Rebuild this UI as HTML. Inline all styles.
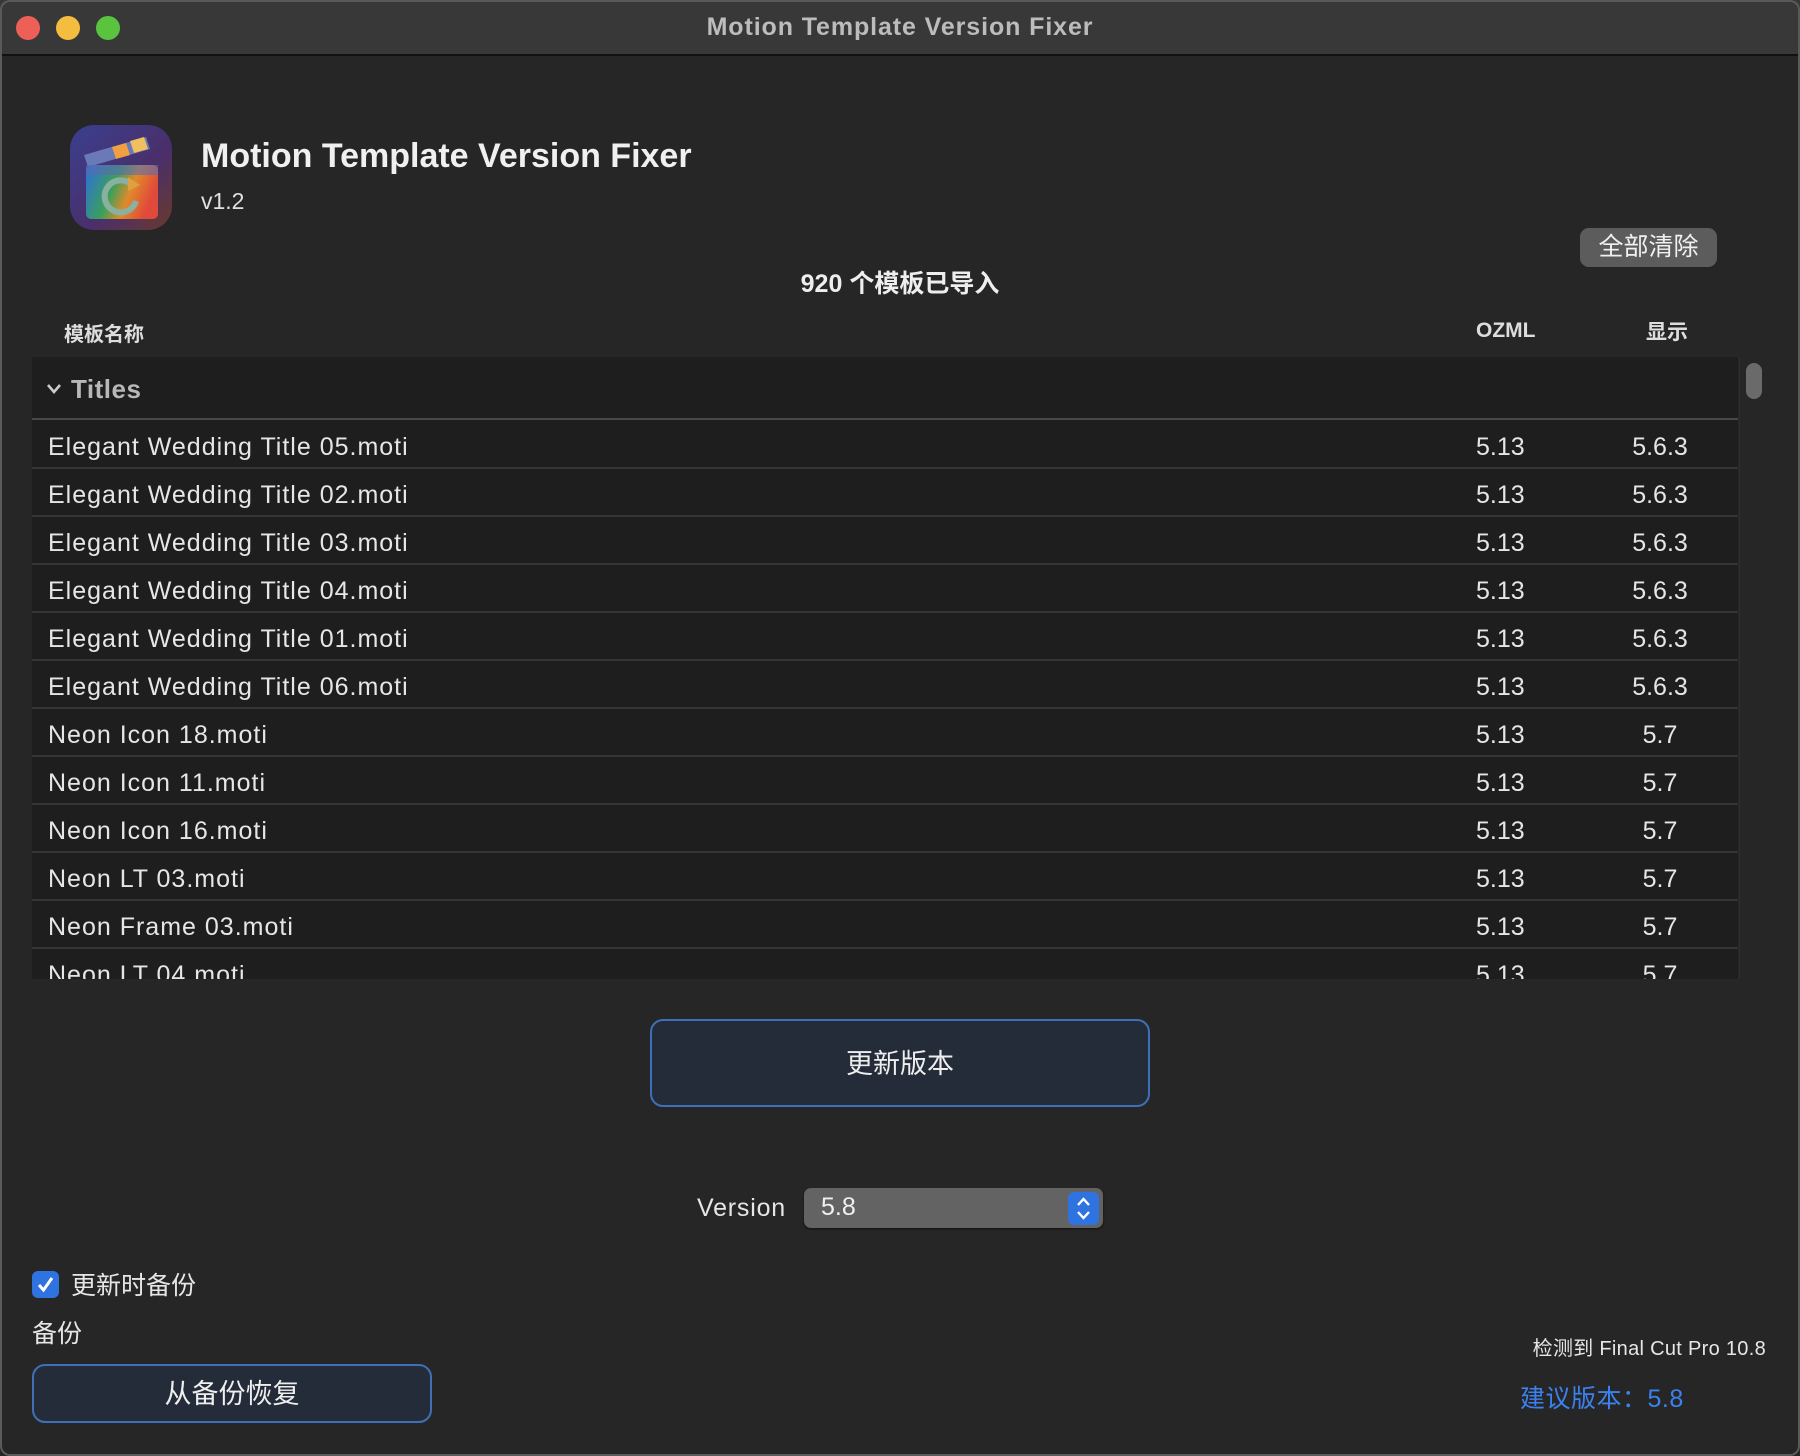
<!DOCTYPE html>
<html><head><meta charset="utf-8">
<style>
*{margin:0;padding:0;box-sizing:border-box}
body{width:1800px;height:1456px;background:#262626;font-family:"Liberation Sans","Noto Sans CJK SC",sans-serif;color:#e6e6e6;position:relative;overflow:hidden}
.a{position:absolute;white-space:nowrap}
.win{position:absolute;left:0;top:0;width:1800px;height:1456px;border:2px solid #5a5a5a;border-radius:10px;pointer-events:none}
.tb{position:absolute;left:0;top:0;width:1800px;height:56px;background:#383838;border-bottom:2px solid #111}
.dot{position:absolute;top:16px;width:24px;height:24px;border-radius:50%}
.row{position:absolute;left:32px;width:1706px;height:48px;border-bottom:2px solid #343434;font-size:25px}
.row span{position:absolute;top:12px}
.row span:first-child{letter-spacing:1px}
.btn{position:absolute;background:#242c39;border:2px solid #3f6fb8;border-radius:13px;color:#eee;text-align:center}
</style></head><body>
<div class="tb">
<div class="dot" style="left:16px;background:#ed5f57"></div>
<div class="dot" style="left:56px;background:#f5bd3f"></div>
<div class="dot" style="left:96px;background:#5ac43f"></div>
<div class="a" style="left:0;width:1800px;text-align:center;top:13px;font-size:25px;font-weight:bold;color:#bcbcbc;letter-spacing:0.9px">Motion Template Version Fixer</div>
</div>

<svg class="a" style="left:70px;top:125px" width="102" height="105" viewBox="0 0 102 105">
<defs>
<linearGradient id="bg" x1="0" y1="0" x2="1" y2="1"><stop offset="0" stop-color="#3a3f8f"/><stop offset="0.6" stop-color="#4a2f6a"/><stop offset="1" stop-color="#6a3a2a"/></linearGradient>
<linearGradient id="rb" x1="0" y1="0" x2="1" y2="0.3"><stop offset="0" stop-color="#2f6de0"/><stop offset="0.45" stop-color="#3aa05a"/><stop offset="0.7" stop-color="#e08a2a"/><stop offset="1" stop-color="#e04a3a"/></linearGradient>
</defs>
<rect x="0" y="0" width="102" height="105" rx="24" fill="url(#bg)"/>
<polygon points="14,30 76,12 80,24 18,42" fill="#6a7ab8"/>
<polygon points="42,22 56,18 60,30 46,34" fill="#f0a040"/>
<polygon points="60,16 74,12 78,24 64,28" fill="#f0c060"/>
<rect x="16" y="40" width="72" height="54" rx="5" fill="url(#rb)"/>
<rect x="16" y="40" width="72" height="10" fill="#5a6ab0" opacity="0.6"/>
<path d="M62 60 A16 16 0 1 0 66 76" fill="none" stroke="#8ab0a0" stroke-width="6"/>
<polygon points="58,52 70,60 58,66" fill="#e0a040"/>
</svg>

<div class="a" style="left:201px;top:137px;font-size:34px;font-weight:bold;color:#f0f0f0">Motion Template Version Fixer</div>
<div class="a" style="left:201px;top:188px;font-size:23px;color:#e0e0e0">v1.2</div>

<div class="a" style="left:1580px;top:228px;width:137px;height:39px;background:#5c5c5c;border-radius:9px;font-size:25px;text-align:center;line-height:39px;color:#f0f0f0">全部清除</div>

<div class="a" style="left:0;width:1800px;text-align:center;top:264px;font-size:25px;font-weight:bold;color:#eee">920 个模板已导入</div>

<div class="a" style="left:64px;top:318px;font-size:20px;font-weight:bold;color:#ddd">模板名称</div>
<div class="a" style="left:1476px;top:319px;font-size:21px;font-weight:bold;color:#ddd">OZML</div>
<div class="a" style="left:1646px;top:316px;font-size:21px;font-weight:bold;color:#ddd">显示</div>

<div class="a" style="left:32px;top:357px;width:1706px;height:622px;background:#1e1e1e;overflow:hidden">
 <div style="position:absolute;left:0;top:0;width:1706px;height:63px;border-bottom:2px solid #484848">
  <svg style="position:absolute;left:14px;top:26px" width="16" height="12" viewBox="0 0 16 12"><path d="M2 2 L8 9 L14 2" fill="none" stroke="#ccc" stroke-width="2.6"/></svg>
  <span style="position:absolute;left:39px;top:17px;font-size:26px;font-weight:bold;color:#b8b8b8;letter-spacing:0.5px">Titles</span>
 </div>
</div>

<div class="a" style="left:1739px;top:357px;width:29px;height:622px;background:#262626;border-left:1px solid #2e2e2e"></div>
<div class="a" style="left:1746px;top:363px;width:16px;height:36px;background:#6a6a6a;border-radius:8px"></div>

<div class="a" style="left:0;top:0;width:1800px;height:979px;overflow:hidden">
<div class="row" style="top:421px"><span style="left:16px">Elegant Wedding Title 05.moti</span><span style="left:1444px">5.13</span><span style="left:1585px;width:86px;text-align:center">5.6.3</span></div>
<div class="row" style="top:469px"><span style="left:16px">Elegant Wedding Title 02.moti</span><span style="left:1444px">5.13</span><span style="left:1585px;width:86px;text-align:center">5.6.3</span></div>
<div class="row" style="top:517px"><span style="left:16px">Elegant Wedding Title 03.moti</span><span style="left:1444px">5.13</span><span style="left:1585px;width:86px;text-align:center">5.6.3</span></div>
<div class="row" style="top:565px"><span style="left:16px">Elegant Wedding Title 04.moti</span><span style="left:1444px">5.13</span><span style="left:1585px;width:86px;text-align:center">5.6.3</span></div>
<div class="row" style="top:613px"><span style="left:16px">Elegant Wedding Title 01.moti</span><span style="left:1444px">5.13</span><span style="left:1585px;width:86px;text-align:center">5.6.3</span></div>
<div class="row" style="top:661px"><span style="left:16px">Elegant Wedding Title 06.moti</span><span style="left:1444px">5.13</span><span style="left:1585px;width:86px;text-align:center">5.6.3</span></div>
<div class="row" style="top:709px"><span style="left:16px">Neon Icon 18.moti</span><span style="left:1444px">5.13</span><span style="left:1585px;width:86px;text-align:center">5.7</span></div>
<div class="row" style="top:757px"><span style="left:16px">Neon Icon 11.moti</span><span style="left:1444px">5.13</span><span style="left:1585px;width:86px;text-align:center">5.7</span></div>
<div class="row" style="top:805px"><span style="left:16px">Neon Icon 16.moti</span><span style="left:1444px">5.13</span><span style="left:1585px;width:86px;text-align:center">5.7</span></div>
<div class="row" style="top:853px"><span style="left:16px">Neon LT 03.moti</span><span style="left:1444px">5.13</span><span style="left:1585px;width:86px;text-align:center">5.7</span></div>
<div class="row" style="top:901px"><span style="left:16px">Neon Frame 03.moti</span><span style="left:1444px">5.13</span><span style="left:1585px;width:86px;text-align:center">5.7</span></div>
<div class="row" style="top:949px"><span style="left:16px">Neon LT 04.moti</span><span style="left:1444px">5.13</span><span style="left:1585px;width:86px;text-align:center">5.7</span></div>
</div>

<div class="btn" style="left:650px;top:1019px;width:500px;height:88px;line-height:86px;font-size:27px">更新版本</div>

<div class="a" style="left:697px;top:1194px;font-size:25px;color:#e6e6e6;letter-spacing:0.8px">Version</div>
<div class="a" style="left:804px;top:1188px;width:299px;height:40px;background:#636363;border-radius:7px;box-shadow:0 1px 2px #111"></div>
<div class="a" style="left:821px;top:1193px;font-size:25px;color:#f0f0f0">5.8</div>
<div class="a" style="left:1068px;top:1192px;width:31px;height:33px;background:#2f73e0;border-radius:6px"></div>
<svg class="a" style="left:1068px;top:1192px" width="31" height="33" viewBox="0 0 31 33"><path d="M10 13 L15.5 7 L21 13 M10 20 L15.5 26 L21 20" fill="none" stroke="#fff" stroke-width="2.4"/></svg>

<div class="a" style="left:32px;top:1271px;width:27px;height:27px;background:#2f73e0;border-radius:6px"></div>
<svg class="a" style="left:32px;top:1271px" width="27" height="27" viewBox="0 0 27 27"><path d="M7 14 L11.5 19 L20 7" fill="none" stroke="#fff" stroke-width="3"/></svg>
<div class="a" style="left:71px;top:1266px;font-size:25px;color:#e6e6e6">更新时备份</div>
<div class="a" style="left:32px;top:1314px;font-size:25px;color:#e6e6e6">备份</div>

<div class="btn" style="left:32px;top:1364px;width:400px;height:59px;line-height:57px;font-size:27px">从备份恢复</div>

<div class="a" style="right:34px;top:1332px;font-size:20px;color:#e6e6e6;letter-spacing:0.3px">检测到 Final Cut Pro 10.8</div>
<div class="a" style="left:1520px;top:1379px;font-size:25px;color:#3b82f0;letter-spacing:0.5px">建议版本：5.8</div>

<div class="win"></div>
</body></html>
